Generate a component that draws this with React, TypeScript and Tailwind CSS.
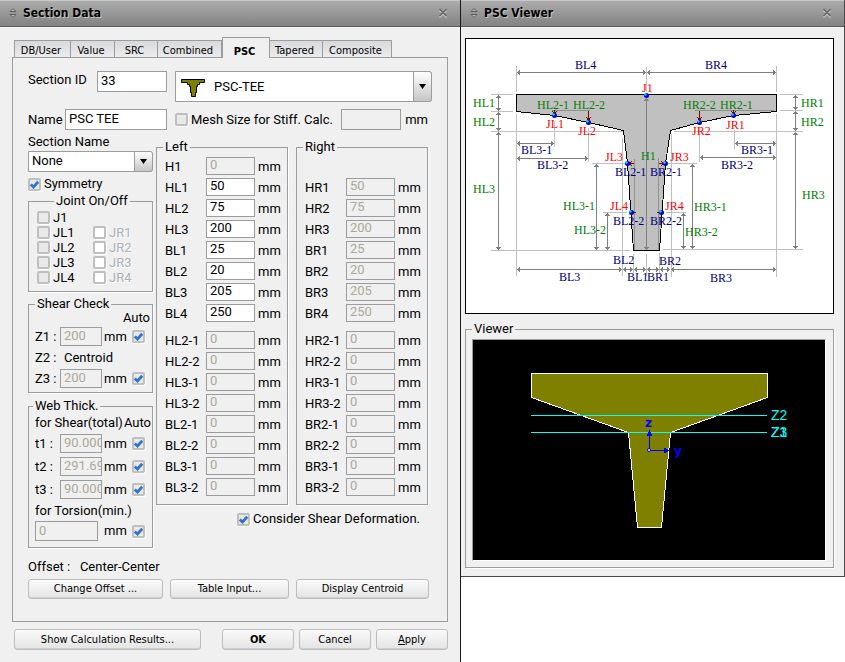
import { useState, type ReactNode } from 'react'
import clsx from 'clsx'

interface Field {
  name: string
  value: string
}

const tabs = [
  { name: 'DB/User', width: 'w-[57px]' },
  { name: 'Value', width: 'w-[44px]' },
  { name: 'SRC', width: 'w-[43px]' },
  { name: 'Combined', width: 'w-[64px]' },
  { name: 'PSC', width: 'w-[48px]' },
  { name: 'Tapered', width: 'w-[53px]' },
  { name: 'Composite', width: 'w-[69px]' },
]

const mainSizes: Field[] = [
  { name: 'H?1', value: '50' },
  { name: 'H?2', value: '75' },
  { name: 'H?3', value: '200' },
  { name: 'B?1', value: '25' },
  { name: 'B?2', value: '20' },
  { name: 'B?3', value: '205' },
  { name: 'B?4', value: '250' },
]

const extraSizes: Field[] = ['H?2-1', 'H?2-2', 'H?3-1', 'H?3-2', 'B?2-1', 'B?2-2', 'B?3-1', 'B?3-2'].map(
  (name) => ({ name, value: '0' })
)

function TitleBar({ title }: { title: string }) {
  return (
    <header className="flex h-[27px] items-center border-t border-b border-t-[#c8c8c8] border-b-[#5c5c5c] bg-linear-to-b from-[#acacac] to-[#828282] pr-3 pb-[2px] pl-2">
      <svg width="10" height="12" viewBox="0 0 10 12" fill="#bdbdbd" stroke="#5a5a5a">
        <path d="M2 4.5 5 1.5 8 4.5z M2 7.5 5 10.5 8 7.5z" />
      </svg>
      <h1 className="ml-[5px] flex-1 font-['DejaVu_Sans_Condensed','DejaVu_Sans',sans-serif] text-[12px] font-bold text-black [text-shadow:1px_1px_0_#c4c4c4]">
        {title}
      </h1>
      <button type="button" aria-label="Close">
        <svg width="10" height="10" viewBox="0 0 10 10" fill="none" strokeWidth="1.6">
          <path d="M1.5 2.5 8.5 9.5M8.5 2.5 1.5 9.5" stroke="#c4c4c4" />
          <path d="M1.5 1 8.5 8M8.5 1 1.5 8" stroke="#686868" />
        </svg>
      </button>
    </header>
  )
}

function Group({ title, className, legend, children }: { title: string; className?: string; legend?: string; children: ReactNode }) {
  return (
    <fieldset className={clsx('min-w-0 border border-[#9c9c9f] shadow-[1px_1px_0_#fff]', className)}>
      <legend className={clsx('h-[14px] px-[2px] leading-[14px]', legend)}>{title}</legend>
      {children}
    </fieldset>
  )
}

function Check({ id, label, checked, disabled, white, className }: {
  id: string
  label?: string
  checked?: boolean
  disabled?: boolean
  white?: boolean
  className?: string
}) {
  return (
    <span className={clsx('flex items-center gap-[3px]', className)}>
      <span className="grid size-[13px] shrink-0 place-items-center">
        <input
          id={id}
          type="checkbox"
          defaultChecked={checked}
          disabled={disabled}
          aria-label={label ? undefined : id}
          className={clsx(
            'peer col-start-1 row-start-1 size-[13px] appearance-none rounded-[2px] border-2 border-[#bfbfbf] shadow-[1px_1px_0_#fff]',
            white ? 'bg-white' : 'bg-[#e9e9e9]'
          )}
        />
        <svg
          className="pointer-events-none invisible col-start-1 row-start-1 peer-checked:visible"
          width="9"
          height="9"
          viewBox="0 0 9 9"
          fill="none"
          stroke="#2f74c9"
          strokeWidth="2.8"
        >
          <path d="M.8 4.5 3.5 7 8.2 1.8" />
        </svg>
      </span>
      {label && (
        <label htmlFor={id} className={clsx('whitespace-nowrap', white && 'text-[#a9b1b9] [text-shadow:1px_1px_0_#fff]')}>
          {label}
        </label>
      )}
    </span>
  )
}

function TextBox({ id, value, disabled, className }: { id: string; value?: string; disabled?: boolean; className?: string }) {
  return (
    <input
      id={id}
      type="text"
      defaultValue={value}
      disabled={disabled}
      className={clsx(
        'min-w-0 border border-[#9c9c9f] pb-[2px] pl-[3px] outline-none',
        disabled ? 'bg-[#f0f0f0] text-[#aca899]' : 'bg-white text-black',
        className
      )}
    />
  )
}

function Button({ className, children }: { className?: string; children: ReactNode }) {
  return (
    <button
      type="button"
      className={clsx(
        "rounded-[3px] border border-[#bdbdbd] bg-linear-to-b from-[#fafafa] to-[#e4e4e4] font-['DejaVu_Sans_Condensed','DejaVu_Sans',sans-serif] text-[11px] whitespace-nowrap text-black shadow-[inset_0_-1px_0_#cfcfcf]",
        className
      )}
    >
      {children}
    </button>
  )
}

function DropArrow() {
  return (
    <span className="pointer-events-none absolute inset-y-0 right-0 grid w-[19px] place-items-center rounded-r-[3px] border border-[#9c9c9f] bg-linear-to-b from-white to-[#c6c6c6]">
      <svg width="7" height="5" viewBox="0 0 7 5">
        <path d="M0 0h7L3.5 5z" />
      </svg>
    </span>
  )
}

function SizeRow({ name, value, disabled }: Field & { disabled?: boolean }) {
  return (
    <div className="flex h-[21px] items-center">
      <label htmlFor={name} className="w-[41px] shrink-0 pt-[2px]">{name}</label>
      <TextBox id={name} value={value} disabled={disabled} className="h-[18px] w-[49px]" />
      <span className="ml-[3px] pt-[2px]">mm</span>
    </div>
  )
}

function AutoRow({ id, label, value, wide, className }: { id: string; label?: string; value: string; wide?: boolean; className: string }) {
  return (
    <div className={clsx('flex items-center', className)}>
      {label && <label htmlFor={id} className="w-[25px] shrink-0 whitespace-pre">{label}</label>}
      <TextBox id={id} value={value} disabled className={wide ? 'h-5 w-[63px]' : 'h-[19px] w-[42px]'} />
      <span className="ml-auto flex w-[41px] items-center justify-between">
        mm
        <Check id={`${id} auto`} checked />
      </span>
    </div>
  )
}

// dimension line with an open arrow head on both ends
function Dim({ x1, y1, x2, y2 }: { x1: number; y1: number; x2: number; y2: number }) {
  const heads =
    y1 === y2
      ? `M${x1 + 3} ${y1 - 2}l-2 2l2 2M${x2 - 3} ${y2 - 2}l2 2l-2 2`
      : `M${x1 - 2} ${y1 + 3}l2 -2l2 2M${x2 - 2} ${y2 - 3}l2 2l2 -2`
  return <path d={`M${x1} ${y1}L${x2} ${y2}${heads}`} stroke="#808080" fill="none" />
}

const dims = [
  [517, 72.5, 646, 72.5], [647, 72.5, 776, 72.5],
  [498.5, 95, 498.5, 111], [498.5, 112, 498.5, 131], [498.5, 132, 498.5, 250],
  [795.5, 95, 795.5, 110], [795.5, 111, 795.5, 131], [795.5, 132, 795.5, 249],
  [517, 143.5, 554, 143.5], [517, 158.5, 588, 158.5],
  [735, 143.5, 776, 143.5], [700, 157.5, 776, 157.5],
  [596.5, 164, 596.5, 250], [607.5, 213, 607.5, 250],
  [692.5, 164, 692.5, 249], [683.5, 213, 683.5, 249],
  [646.5, 98, 646.5, 250],
  [517, 269.5, 622, 269.5], [623, 269.5, 633, 269.5], [634, 269.5, 646, 269.5],
  [647, 269.5, 659, 269.5], [660, 269.5, 670, 269.5], [671, 269.5, 776, 269.5],
]

const joints = [
  [646.5, 95.5], [554.5, 115.5], [588.5, 122.5], [733.5, 115.5], [699.5, 122.5],
  [627.5, 163.5], [631.5, 212.5], [665.5, 163.5], [661.5, 212.5],
]

const marks: { color: string; items: [string, number, number][] }[] = [
  {
    color: '#008000',
    items: [
      ['HL1', 473, 107], ['HL2', 473, 126], ['HL3', 473, 193], ['HL2-1', 537, 109], ['HL2-2', 573, 109],
      ['HL3-1', 563, 210], ['HL3-2', 574, 234], ['H1', 641, 160], ['HR2-2', 683, 109], ['HR2-1', 720, 109],
      ['HR1', 801, 107], ['HR2', 801, 126], ['HR3', 802, 199], ['HR3-1', 694, 211], ['HR3-2', 685, 236],
    ],
  },
  {
    color: '#000080',
    items: [
      ['BL4', 575, 69], ['BR4', 705, 69], ['BL3-1', 521, 154], ['BL3-2', 537, 169], ['BR3-1', 741, 154],
      ['BR3-2', 721, 169], ['BL2-1', 615, 176], ['BR2-1', 650, 176], ['BL2-2', 613, 225], ['BR2-2', 650, 225],
      ['BL2', 613, 264], ['BR2', 659, 265], ['BL3', 559, 281], ['BL1', 627, 281], ['BR1', 647, 281], ['BR3', 710, 282],
    ],
  },
  {
    color: '#ff0000',
    items: [
      ['J1', 642, 92], ['JL1', 546, 128], ['JL2', 578, 135], ['JL3', 605, 161], ['JL4', 610, 210],
      ['JR1', 726, 129], ['JR2', 692, 135], ['JR3', 670, 161], ['JR4', 665, 210],
    ],
  },
]

function SectionDiagram() {
  return (
    <svg viewBox="466 39 367 274" className="block w-full" role="img" aria-label="PSC-TEE dimensions">
      <g shapeRendering="crispEdges">
        <path
          d="M516.5 94.5H776.5V111.5L733.5 115.5L699.5 122.5L670.5 130.5L665.5 163.5L659.5 250.5H633.5L627.5 163.5L623.5 130.5L588.5 122.5L554.5 115.5L516.5 111.5Z"
          fill="#c0c0c0"
          stroke="#000"
        />
        <path
          d="M516.5 66V92M516.5 114V276M646.5 67V92M776.5 66V92M776.5 114V277M554.5 121V147M588.5 128V162M734.5 130V149M699.5 128V162M622.5 138V276M671.5 134V277M633.5 254V273M646.5 254V276M659.5 253V273M491 94.5H513M491 111.5H513M491 131.5H623M491 250.5H630M780 94.5H803M780 110.5H803M674 131.5H803M663 249.5H803M592 163.5H627M603 212.5H627M668 163.5H697M666 212.5H686"
          stroke="#c0c0c0"
        />
        <path d="M552 110.5H590M695 110.5H774M634.5 159V250M658.5 158V250" stroke="#909090" />
        {dims.map(([x1, y1, x2, y2], i) => (
          <Dim key={i} x1={x1} y1={y1} x2={x2} y2={y2} />
        ))}
        <path
          d="M554.5 110V114M552 111l2.5 3l2.5 -3M588.5 111V120M586 117l2.5 3l2.5 -3M733.5 110V114M731 111l2.5 3l2.5 -3M699.5 111V120M697 117l2.5 3l2.5 -3M634 163.5H629M632 161l-3 2.5l3 2.5M659 163.5H664M661 161l3 2.5l-3 2.5M636 212.5H633M657 212.5H660"
          stroke="#800000"
          fill="none"
        />
      </g>
      {joints.map(([x, y]) => (
        <g key={`${x}-${y}`}>
          <circle cx={x} cy={y} r="2.5" fill="#0000c8" />
          <circle cx={x - 1} cy={y - 1} r="1.2" fill="#00e0ff" />
        </g>
      ))}
      {marks.map((group) => (
        <g key={group.color} fill={group.color} className="font-['Liberation_Serif',serif] text-[12px]">
          {group.items.map(([text, x, y]) => (
            <text key={text} x={x} y={y}>{text}</text>
          ))}
        </g>
      ))}
    </svg>
  )
}

function SectionViewer() {
  return (
    <svg viewBox="473 340 352 220" className="block w-full bg-black" role="img" aria-label="Section shape">
      <g shapeRendering="crispEdges" fill="none">
        <path d="M531.5 373.5H767.5V397.5L670.5 432.5L661.5 527.5H637.5L628.5 432.5L531.5 397.5Z" fill="#808000" stroke="#fff" />
        <path d="M531 415.5H767M531 432.5H767" stroke="#0ff" />
        <path d="M649.5 449V431M651 450.5H670M647.5 435.5h4l-2 -4zM664.5 448.5v4l4 -2z" stroke="#00f" />
      </g>
      <circle cx="649" cy="450" r="1.5" fill="#fff" stroke="#00f" />
      <g fill="#0ff" className="font-['Liberation_Sans',sans-serif] text-[14px]">
        <text x="771" y="420">Z2</text>
        <text x="771" y="437">Z1</text>
        <text x="771" y="437">Z3</text>
      </g>
      <g fill="#00f" className="font-['DejaVu_Sans',sans-serif] text-[12px] font-bold">
        <text x="645" y="427">z</text>
        <text x="674" y="455">y</text>
      </g>
    </svg>
  )
}

export default function App() {
  const [activeTab, setActiveTab] = useState('PSC')

  return (
    <main className="grid min-h-screen grid-cols-[461fr_384fr] bg-white font-[Roboto,sans-serif] text-[13px] leading-4 text-black">
      <section className="border-r border-[#1a1a1a] bg-[#f0f0f0]">
        <TitleBar title="Section Data" />
        <div className="px-3 pt-[11px]">
          <div role="tablist" className="flex h-[19px] items-end pl-[2px]">
            {tabs.map(({ name, width }) => (
              <button
                key={name}
                type="button"
                role="tab"
                aria-selected={activeTab === name}
                onClick={() => setActiveTab(name)}
                className={clsx(
                  "shrink-0 border-t border-r border-[#9c9c9f] pr-[3px] font-['DejaVu_Sans_Condensed','DejaVu_Sans',sans-serif] text-[11px] first:border-l",
                  width,
                  activeTab === name
                    ? 'z-10 -mb-px h-[21px] border-l bg-[#f0f0f0] pt-[6px] font-bold'
                    : 'h-[17px] bg-linear-to-b from-[#d8d9dc] to-[#ececee] pt-[2px]'
                )}
              >
                {name}
              </button>
            ))}
          </div>
          <div className="border border-[#9c9c9f] pt-[13px] pb-[22px] pl-[15px]">
            <div className="flex items-start pr-[15px]">
              <label htmlFor="section-id" className="w-[69px] shrink-0 pt-px">Section ID</label>
              <TextBox id="section-id" value="33" className="h-[21px] w-[70px] pb-1" />
              <div className="relative ml-2 flex-1">
                <select aria-label="Section shape" className="h-[31px] w-full appearance-none rounded-r-[3px] border border-[#9c9c9f] bg-white pl-[38px]">
                  <option>PSC-TEE</option>
                </select>
                <svg className="pointer-events-none absolute top-[7px] left-[6px]" width="24" height="19" viewBox="0 0 24 19">
                  <path d="M.5 1.5H23.5V4.5H18.5V6.5H16.5V8.5H15.5V14.5H14.5V18.5H10.5V14.5H9.5V8.5H8.5V6.5H6.5V4.5H.5Z" fill="#808000" stroke="#000" />
                </svg>
                <DropArrow />
              </div>
            </div>

            <div className="mt-[7px] flex items-center pr-[19px]">
              <label htmlFor="name" className="w-[37px] shrink-0">Name</label>
              <TextBox id="name" value="PSC TEE" className="h-[21px] w-[102px] pb-1" />
              <Check id="mesh" label="Mesh Size for Stiff. Calc." disabled className="ml-2" />
              <input aria-label="Mesh size" disabled className="ml-auto h-[21px] w-[60px] border border-[#9c9c9f]" />
              <span className="ml-1">mm</span>
            </div>

            <div className="mt-1 flex items-start gap-[3px] pr-[19px]">
              <div className="w-[125px] shrink-0">
                <label htmlFor="section-name" className="block">Section Name</label>
                <div className="relative mt-px">
                  <select id="section-name" className="h-[21px] w-full appearance-none rounded-r-[3px] border border-[#9c9c9f] bg-white pb-[2px] pl-[3px]">
                    <option>None</option>
                  </select>
                  <DropArrow />
                </div>
                <Check id="symmetry" label="Symmetry" checked className="mt-1" />

                <Group title="Joint On/Off" className="mt-[2px] pt-[2px] pb-[6px] pl-2" legend="ml-[17px]">
                  {['1', '2', '3', '4'].map((n, i) => (
                    <div key={n}>
                      {i === 0 && <Check id="J1" label="J1" disabled className="h-[15px]" />}
                      <div className="flex h-[15px]">
                        <Check id={`JL${n}`} label={`JL${n}`} disabled className="w-14" />
                        <Check id={`JR${n}`} label={`JR${n}`} disabled white />
                      </div>
                    </div>
                  ))}
                </Group>

                <Group title="Shear Check" className="mt-[5px] pr-[7px] pb-[3px] pl-[6px]">
                  <div className="-mr-[5px] h-[15px] text-right leading-[14px]">Auto</div>
                  <AutoRow id="Z1" label="Z1 :" value="200" className="h-[21px]" />
                  <div className="flex h-[21px] items-center">
                    <span className="w-[29px]">Z2 :</span>Centroid
                  </div>
                  <AutoRow id="Z3" label="Z3 :" value="200" className="h-[21px]" />
                </Group>

                <Group title="Web Thick." className="mt-[6px] pr-[7px] pb-[5px] pl-[6px]" legend="-ml-[2px]">
                  <div className="-mr-[6px] flex h-[19px] items-center justify-between whitespace-nowrap">
                    <span>for Shear(total)</span>
                    <span>Auto</span>
                  </div>
                  <AutoRow id="t1" label="t1 :" value="90.0000" className="h-[23px]" />
                  <AutoRow id="t2" label="t2 :" value="291.6923" className="h-[23px]" />
                  <AutoRow id="t3" label="t3 :" value="90.0000" className="h-[23px]" />
                  <label htmlFor="torsion" className="block h-[19px] leading-[19px]">for Torsion(min.)</label>
                  <AutoRow id="torsion" value="0" wide className="h-[22px]" />
                </Group>
              </div>

              <div className="mt-[6px] flex-1">
                <div className="grid grid-cols-2 gap-2">
                  <Group title="Left" className="pt-px pb-[7px] pl-2" legend="-ml-[2px]">
                    <SizeRow name="H1" value="0" disabled />
                    {mainSizes.map(({ name, value }) => (
                      <SizeRow key={name} name={name.replace('?', 'L')} value={value} />
                    ))}
                    <div className="mt-[6px]">
                      {extraSizes.map(({ name, value }) => (
                        <SizeRow key={name} name={name.replace('?', 'L')} value={value} disabled />
                      ))}
                    </div>
                  </Group>
                  <Group title="Right" className="pt-[22px] pb-[7px] pl-2" legend="-ml-[2px]">
                    {mainSizes.map(({ name, value }) => (
                      <SizeRow key={name} name={name.replace('?', 'R')} value={value} disabled />
                    ))}
                    <div className="mt-[6px]">
                      {extraSizes.map(({ name, value }) => (
                        <SizeRow key={name} name={name.replace('?', 'R')} value={value} disabled />
                      ))}
                    </div>
                  </Group>
                </div>
                <Check id="shear-deformation" label="Consider Shear Deformation." checked className="mt-[6px] justify-end pr-2" />
              </div>
            </div>

            <p className="mt-[11px] whitespace-pre">Offset :   Center-Center</p>
            <div className="mt-1 flex gap-[7px] pr-[18px]">
              <Button className="h-5 flex-[133]">Change Offset ...</Button>
              <Button className="h-5 flex-[117]">Table Input...</Button>
              <Button className="h-5 flex-[131]">Display Centroid</Button>
            </div>
          </div>

          <div className="flex gap-[5px] pt-[7px] pb-[10px] pl-[2px]">
            <Button className="mr-4 h-[21px] flex-[185]">Show Calculation Results...</Button>
            <Button className="h-[21px] flex-[70] font-bold">OK</Button>
            <Button className="h-[21px] flex-[70]">Cancel</Button>
            <Button className="h-[21px] flex-[70]"><u>A</u>pply</Button>
          </div>
        </div>
      </section>

      <section className="self-start border-r border-b border-[#4a4a4a] bg-[#f0f0f0]">
        <TitleBar title="PSC Viewer" />
        <div className="pt-[11px] pr-[10px] pb-2 pl-1">
          <div className="border border-black bg-white">
            <SectionDiagram />
          </div>
          <Group title="Viewer" className="mt-2 pt-[3px] pr-[7px] pb-[6px] pl-[6px]">
            <div className="border border-t-[#9c9c9f] border-r-white border-b-white border-l-[#9c9c9f]">
              <SectionViewer />
            </div>
          </Group>
        </div>
      </section>
    </main>
  )
}
